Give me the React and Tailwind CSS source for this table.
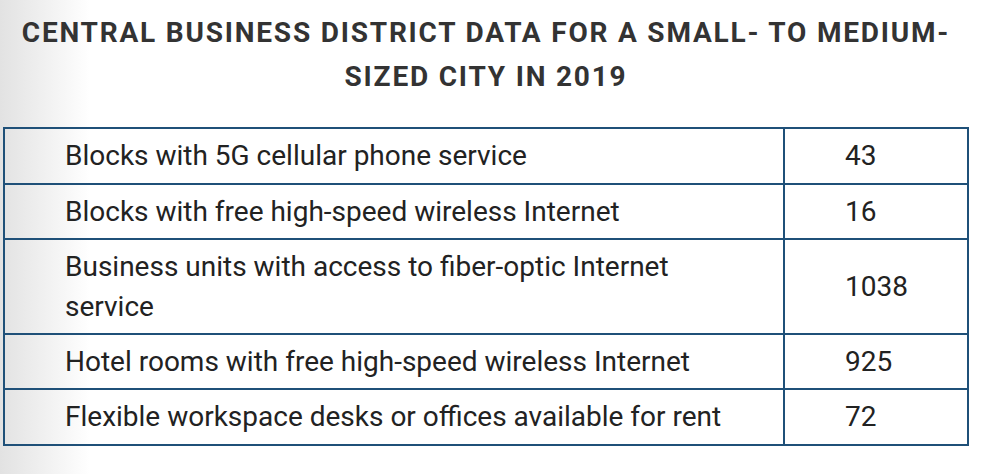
const rows = [
  { label: "Blocks with 5G cellular phone service", value: "43", pad: "pt-[7px] pb-[7px]" },
  { label: "Blocks with free high-speed wireless Internet", value: "16", pad: "pt-[7px] pb-[6px]" },
  { label: "Business units with access to fiber-optic Internet service", value: "1038", pad: "pt-[7px] pb-[6px]" },
  { label: "Hotel rooms with free high-speed wireless Internet", value: "925", pad: "pt-[7px] pb-[6px]" },
  { label: "Flexible workspace desks or offices available for rent", value: "72", pad: "pt-[7px] pb-[7px]" },
];

export default function App() {
  return (
    <div className="w-[982px] h-[474px] overflow-hidden bg-[linear-gradient(to_right,#e2e2e2,#ffffff_90px)] font-['Roboto',sans-serif]">
      <div className="w-[966px] ml-[3px] pt-[11px]">
        <h1 className="mx-auto w-[950px] text-center text-[28px] leading-[44px] font-bold tracking-[1.8px] text-[#333333] uppercase">
          Central Business District Data for a Small- to Medium-Sized City in 2019
        </h1>
        <table className="mt-[28px] w-full border-collapse border-2 border-[#1f5078] text-[28px] leading-[40px] text-[#222222]">
          <tbody>
            {rows.map((r) => (
              <tr key={r.value}>
                <td className={`w-[780px] border-2 border-[#1f5078] pl-[60px] pr-[40px] align-middle ${r.pad}`}>
                  {r.label}
                </td>
                <td className={`border-2 border-[#1f5078] pl-[60px] align-middle ${r.pad}`}>
                  {r.value}
                </td>
              </tr>
            ))}
          </tbody>
        </table>
      </div>
    </div>
  );
}
